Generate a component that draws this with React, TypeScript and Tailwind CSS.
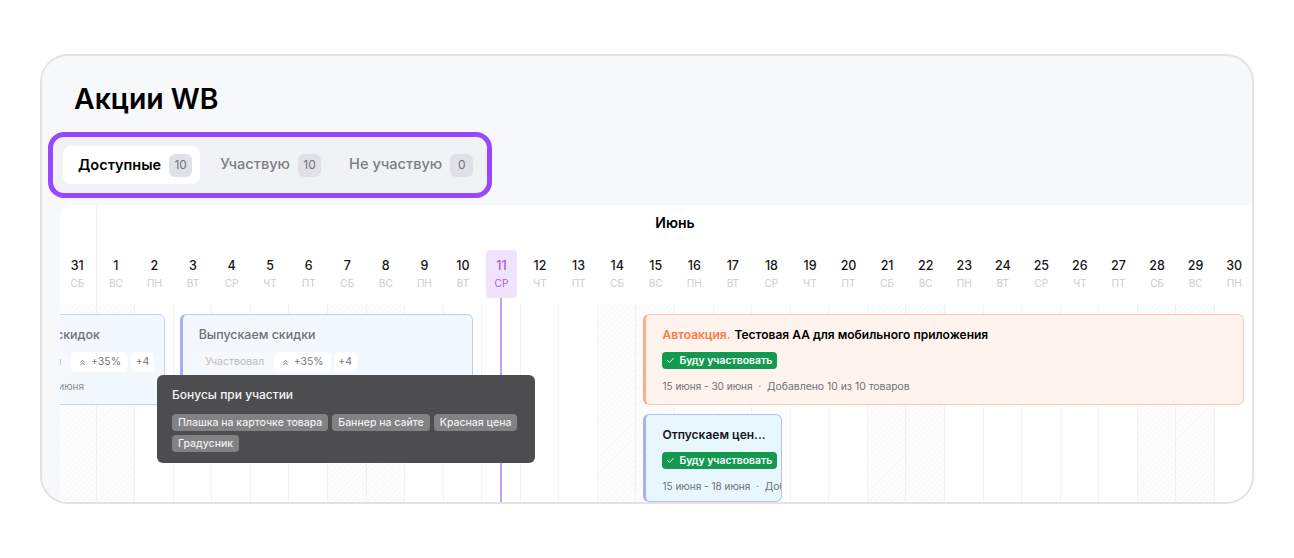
import { Check, ChevronsUp } from "lucide-react";

const WEEK = ["СБ", "ВС", "ПН", "ВТ", "СР", "ЧТ", "ПТ"];
const DAYS = [31, ...Array.from({ length: 30 }, (_, i) => i + 1)];
const TODAY = 11;
const BONUSES = ["Плашка на карточке товара", "Баннер на сайте", "Красная цена", "Градусник"];

function GoingBadge() {
  return (
    <span className="flex h-[17px] w-[115px] shrink-0 items-center gap-[4px] rounded-[4px] bg-[#149a50] pl-[4px] text-[10.4px] font-semibold whitespace-nowrap text-white">
      <Check className="h-[9px] w-[9px]" strokeWidth={2.5} />
      Буду участвовать
    </span>
  );
}

function PastTags() {
  return (
    <div className="mt-[9px] flex items-center gap-[3px] text-[10.5px] whitespace-nowrap text-[#77797f]">
      <span className="flex h-[20px] w-[72px] shrink-0 items-center justify-center rounded-[5px] bg-[#f7f8f9] text-[#b9bbc0]">Участвовал</span>
      <span className="flex h-[20px] w-[57px] shrink-0 items-center justify-center gap-[4px] rounded-[5px] bg-white">
        <ChevronsUp className="h-[9px] w-[9px]" strokeWidth={2.5} />
        +35%
      </span>
      <span className="flex h-[20px] w-[23px] shrink-0 items-center justify-center rounded-[5px] bg-white">+4</span>
    </div>
  );
}

function Tab({ label, count, active }: { label: string; count: number; active?: boolean }) {
  return (
    <div
      className={
        active
          ? "flex h-[38px] items-center gap-2 rounded-lg bg-white pr-2 pl-[15px] text-[14.5px] font-semibold text-black"
          : "flex h-[38px] items-center gap-2 rounded-lg pr-2 pl-[15px] text-[14.6px] font-medium text-[#7c7e85]"
      }
    >
      {label}
      <span className="flex h-[23px] w-[23px] items-center justify-center rounded-md bg-[#dfe1e6] text-xs font-normal text-[#6f7178]">
        {count}
      </span>
    </div>
  );
}

export default function App() {
  return (
    <div className="h-[558px] w-[1294px] bg-white pt-[54px] pl-[40px] font-['Inter',sans-serif]">
      <div className="relative h-[450px] w-[1214px] overflow-hidden rounded-[28px] border-2 border-[#e3e3e6] bg-[#f7f8fa]">
        <h1 className="mt-[26px] ml-[32px] text-[28.4px] leading-[34px] font-semibold text-black">Акции WB</h1>

        {/* Tabs with purple highlight */}
        <div className="mt-4 ml-[6px] flex h-[66px] w-[444px] gap-[5px] rounded-2xl border-[5px] border-[#9747ff] bg-[#f1f2f5] py-[9px] pl-[10px]">
          <Tab label="Доступные" count={10} active />
          <Tab label="Участвую" count={10} />
          <Tab label="Не участвую" count={0} />
        </div>

        {/* Calendar */}
        <div className="relative mt-[7px] ml-[18px] h-[297px] overflow-hidden rounded-tl-[10px] bg-white">
          <div className="absolute top-0 left-[36px] h-[100px] w-px bg-[#f0f0f2]" />
          <div className="h-9 pl-[38px] text-center text-sm leading-9 font-semibold text-black">Июнь</div>

          <div className="mt-[9px] -ml-[2px] grid h-12 grid-cols-[repeat(31,38.57px)]">
            {DAYS.map((d, i) => (
              <div
                key={i}
                className={
                  d === TODAY
                    ? "mx-auto flex w-[31px] flex-col items-center rounded-[4px] bg-[#f0e4fd] pt-[8px] text-[#a855f7]"
                    : "flex flex-col items-center pt-[8px]"
                }
              >
                <span className={d === TODAY ? "text-[12.5px] leading-[16px] font-medium" : "text-[12.5px] leading-[16px] font-medium text-[#17171a]"}>{d}</span>
                <span className={d === TODAY ? "mt-[3px] text-[10px] leading-[12px]" : "mt-[3px] text-[10px] leading-[12px] text-[#c9cbd0]"}>
                  {WEEK[i % 7]}
                </span>
              </div>
            ))}
          </div>

          <div className="relative -ml-[2px] h-[204px]">
            {/* Day columns behind the bars */}
            <div className="absolute inset-0 top-[6px] grid grid-cols-[repeat(31,38.57px)]">
              {DAYS.map((d, i) => (
                <div
                  key={i}
                  className={
                    i % 7 < 2
                      ? "border-r border-[#f1f1f3] bg-[repeating-linear-gradient(135deg,#f8f8f9_0,#f8f8f9_1px,#fdfdfd_1px,#fdfdfd_4px)]"
                      : "border-r border-[#f3f3f5]"
                  }
                />
              ))}
            </div>
            <div className="absolute top-0 bottom-0 left-[442px] w-[2px] bg-[#c79ff5]" />

            {/* Bars */}
            <div className="relative grid grid-cols-[repeat(31,38.57px)] grid-rows-[91px_88px] gap-y-[9px] pt-4">
              <div className="col-start-1 col-end-4 row-start-1 mr-[9px] -ml-[82px] rounded-[6px] border border-[#c9d0f4] bg-[#f2f8fd] pt-[12px] pl-[19px] whitespace-nowrap">
                <p className="-ml-[13px] text-[12.4px] leading-[16px] font-medium text-[#6f7176]">Выпускаем скидок</p>
                <PastTags />
                <p className="mt-[7px] -ml-[2px] text-[10px] text-[#8a8c91]">15 июня - 30 июня</p>
              </div>

              <div className="col-start-4 col-end-12 row-start-1 mr-[9px] ml-[6px] rounded-[6px] border border-l-[3px] border-[#c3cbf3] border-l-[#a5aef0] bg-[#f2f8fd] pt-[12px] pl-[16px] whitespace-nowrap">
                <p className="text-[12.4px] leading-[16px] font-medium text-[#6f7176]">Выпускаем скидки</p>
                <PastTags />
              </div>

              <div className="col-start-16 col-end-32 row-start-1 mr-[9px] ml-[7px] rounded-[6px] border-[1.5px] border-l-[3px] border-[#fccab3] border-l-[#ffac8e] bg-[#fff3ed] pt-[12px] pl-[16px] whitespace-nowrap">
                <p className="text-[12px] leading-[16px] font-semibold text-black">
                  <span className="mr-[1px] text-[#ff7a45]">Автоакция.</span> Тестовая АА для мобильного приложения
                </p>
                <div className="mt-[9px]"><GoingBadge /></div>
                <p className="mt-[10px] text-[10px] text-[#6f7176]">
                  15 июня - 30 июня <span className="text-[10.4px]">&nbsp;·&nbsp; Добавлено 10 из 10 товаров</span>
                </p>
              </div>

              <div className="col-start-16 col-end-20 row-start-2 mr-[9px] ml-[7px] overflow-hidden rounded-[6px] border border-l-[3px] border-[#aec4ee] border-l-[#a5b4ee] bg-[#e8f6fe] pt-[12px] pl-[16px] whitespace-nowrap">
                <p className="text-[12px] leading-[16px] font-semibold text-[#17171a]">Отпускаем цен...</p>
                <div className="mt-[9px]"><GoingBadge /></div>
                <p className="mt-[10px] text-[10px] text-[#6f7176]">
                  15 июня - 18 июня <span className="text-[10.4px]">&nbsp;·&nbsp; Добавлено</span>
                </p>
              </div>
            </div>
          </div>
        </div>

        {/* Tooltip */}
        <div className="absolute top-[319px] left-[115px] h-[88px] w-[378px] rounded-[6px] bg-[#4d4d50] px-[15px] pt-[12px]">
          <p className="text-[12px] leading-[16px] font-medium text-[#f4f4f5]">Бонусы при участии</p>
          <div className="mt-[11px] flex flex-wrap gap-x-[4px] gap-y-[4px]">
            {BONUSES.map((b) => (
              <span key={b} className="flex h-[17px] items-center rounded-[4px] bg-[#828284] px-[6px] text-[10.5px] font-medium whitespace-nowrap text-[#f0f0f0]">
                {b}
              </span>
            ))}
          </div>
        </div>
      </div>
    </div>
  );
}
